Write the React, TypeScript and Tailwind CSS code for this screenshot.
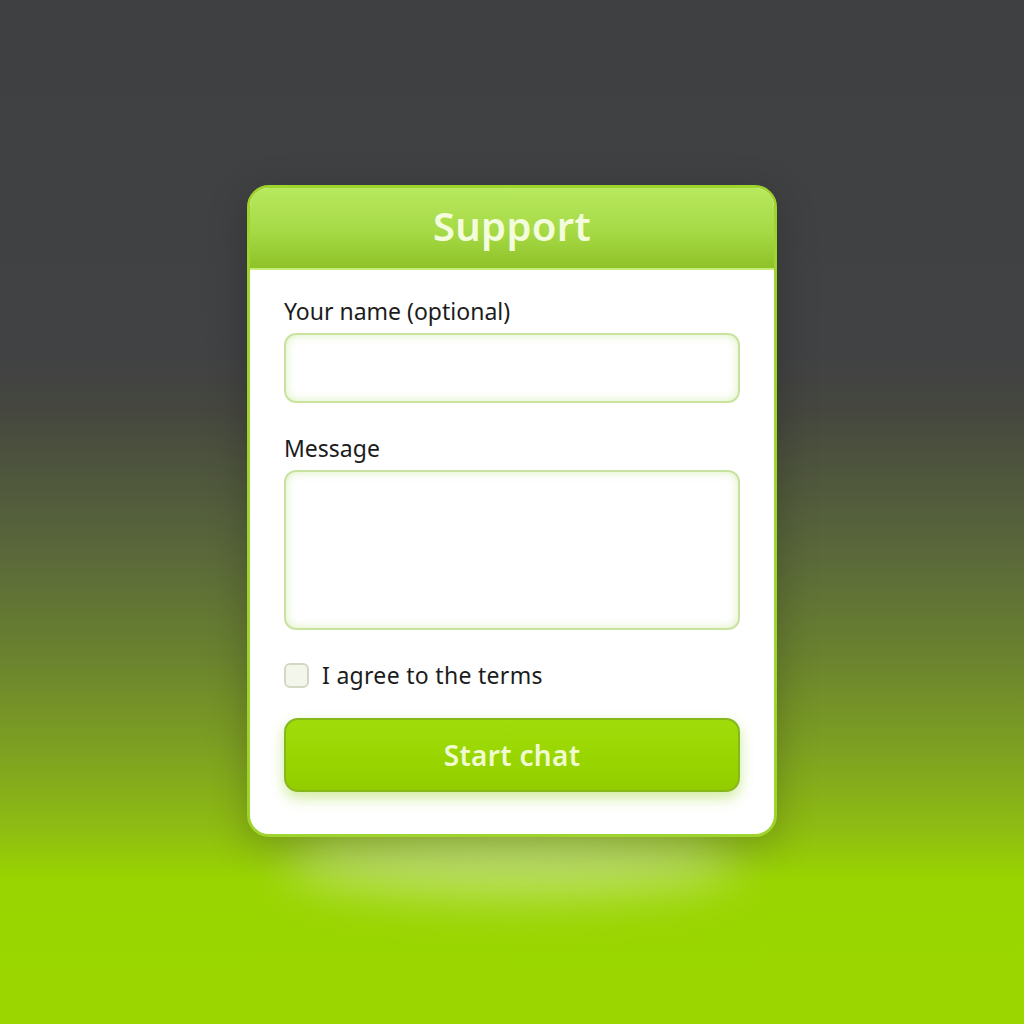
export default function App() {
  return (
    <div
      className="relative w-full h-[1024px] overflow-hidden flex justify-center bg-[linear-gradient(180deg,#3f4042_0%,#414243_35%,#45473f_40%,#5a683a_54%,#6a822f_64%,#7da022_73%,#8fbd12_81%,#99d500_86%,#9bd600_100%)]"
      style={{ fontFamily: '"Noto Sans", Inter, sans-serif' }}
    >
      {/* glow under card */}
      <div className="absolute left-1/2 -translate-x-1/2 top-[826px] w-[460px] h-[70px] rounded-[50%] bg-[#cfe79a] opacity-70 blur-xl" />

      <div className="relative mt-[185px] w-[530px] h-[652px] rounded-[22px] bg-white border-[3px] border-[#9fd42e] shadow-[0_10px_40px_rgba(0,0,0,0.22)] overflow-hidden flex flex-col">
        <div className="h-[82px] shrink-0 flex items-center justify-center bg-[linear-gradient(180deg,#b7e85e_0%,#a6da45_55%,#8fc228_100%)] border-b-2 border-[#c6ec7a]">
          <h1 className="text-[40px] font-semibold text-[#f3fcdc] tracking-[0.3px] leading-none pb-1">
            Support
          </h1>
        </div>

        <div className="flex flex-col px-[34px] pt-[30px]">
          <label className="text-[23px] text-[#1c1c1c] leading-none">Your name (optional)</label>
          <div className="mt-[10px] h-[70px] rounded-[12px] border-2 border-[#c8e39f] bg-white shadow-[inset_0_0_10px_rgba(190,225,130,0.55)]" />

          <label className="mt-[34px] text-[23px] text-[#1c1c1c] leading-none">Message</label>
          <div className="mt-[10px] h-[160px] rounded-[12px] border-2 border-[#c8e39f] bg-white shadow-[inset_0_0_10px_rgba(190,225,130,0.55)]" />

          <div className="mt-[33px] flex items-center gap-[13px]">
            <div className="w-[25px] h-[25px] rounded-[6px] border-2 border-[#d3d8c5] bg-[#f3f6ea]" />
            <span className="text-[23px] text-[#1c1c1c] leading-none tracking-[0.3px]">I agree to the terms</span>
          </div>

          <button className="mt-[30px] h-[74px] rounded-[14px] border-2 border-[#86b81c] bg-[linear-gradient(180deg,#9fdc0a_0%,#98d500_60%,#92cc00_100%)] shadow-[0_6px_14px_rgba(150,210,40,0.45)] text-[28px] font-semibold text-[#f0fbd2] tracking-[0.3px]">
            Start chat
          </button>
        </div>
      </div>
    </div>
  );
}
